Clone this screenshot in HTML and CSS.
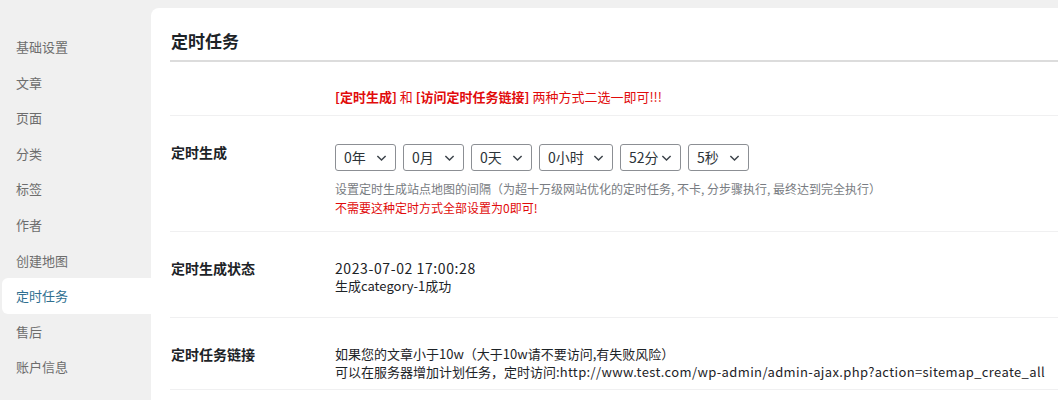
FILE: index.html
```html
<!DOCTYPE html>
<html lang="zh-CN">
<head>
    <meta charset="UTF-8">
    <meta name="viewport" content="width=device-width, initial-scale=1.0">
    <title>定时任务</title>
    <link rel="stylesheet" href="styles.css">
</head>
<body>

    <div class="wrap">

        <ul class="side-menu">
            <li>基础设置</li>
            <li>文章</li>
            <li>页面</li>
            <li>分类</li>
            <li>标签</li>
            <li>作者</li>
            <li>创建地图</li>
            <li class="active">定时任务</li>
            <li>售后</li>
            <li>账户信息</li>
        </ul>

        <div class="panel">
            <h2 class="panel-title">定时任务</h2>

            <div class="form-row row-notice">
                <div class="form-label"></div>
                <div class="form-field">
                    <p class="text-red"><b>[定时生成]</b> 和 <b>[访问定时任务链接]</b> 两种方式二选一即可!!!</p>
                </div>
            </div>

            <div class="form-row row-interval">
                <div class="form-label">定时生成</div>
                <div class="form-field">
                    <div class="select-group">
                        <div class="select"><span>0年</span><svg viewBox="0 0 12 8"><path d="M1.5 1.8 6 6.2 10.5 1.8"/></svg></div>
                        <div class="select"><span>0月</span><svg viewBox="0 0 12 8"><path d="M1.5 1.8 6 6.2 10.5 1.8"/></svg></div>
                        <div class="select"><span>0天</span><svg viewBox="0 0 12 8"><path d="M1.5 1.8 6 6.2 10.5 1.8"/></svg></div>
                        <div class="select select-wide"><span>0小时</span><svg viewBox="0 0 12 8"><path d="M1.5 1.8 6 6.2 10.5 1.8"/></svg></div>
                        <div class="select"><span>52分</span><svg viewBox="0 0 12 8"><path d="M1.5 1.8 6 6.2 10.5 1.8"/></svg></div>
                        <div class="select"><span>5秒</span><svg viewBox="0 0 12 8"><path d="M1.5 1.8 6 6.2 10.5 1.8"/></svg></div>
                    </div>
                    <p class="description">设置定时生成站点地图的间隔（为超十万级网站优化的定时任务, 不卡, 分步骤执行, 最终达到完全执行）</p>
                    <p class="text-red text-small">不需要这种定时方式全部设置为0即可!</p>
                </div>
            </div>

            <div class="form-row row-status">
                <div class="form-label">定时生成状态</div>
                <div class="form-field">
                    <p class="status-time">2023-07-02 17:00:28</p>
                    <p>生成category-1成功</p>
                </div>
            </div>

            <div class="form-row row-link">
                <div class="form-label">定时任务链接</div>
                <div class="form-field">
                    <p>如果您的文章小于10w（大于10w请不要访问,有失败风险）</p>
                    <p>可以在服务器增加计划任务，定时访问:<span class="url">http://www.test.com/wp-admin/admin-ajax.php?action=sitemap_create_all</span></p>
                </div>
            </div>
        </div>

    </div>

</body>
</html>
```

FILE: styles.css
```css
body {
    margin: 0;
    background: #f0f0f0;
    font-family: "Noto Sans CJK SC", "Noto Sans", sans-serif;
    color: #1d2327;
}
.wrap {
    display: flex;
    align-items: flex-start;
    height: 400px;
    overflow: hidden;
}
.side-menu {
    width: 149px;
    margin: 0 0 0 2px;
    padding: 29px 0 0 0;
    list-style: none;
    flex-shrink: 0;
}
.side-menu li {
    height: 35.6px;
    line-height: 35.6px;
    padding-left: 14px;
    font-size: 13px;
    color: #6d6d6d;
    border-radius: 6px 0 0 6px;
}
.side-menu li.active {
    background: #fff;
    color: #2f6f90;
}
.panel {
    flex: 1;
    margin-top: 8px;
    min-height: 400px;
    background: #fff;
    border-radius: 8px 0 0 0;
    padding: 21px 0 0 19px;
}
.panel-title {
    margin: 0;
    padding: 0 0 7px 1px;
    font-size: 17px;
    line-height: 24px;
    font-weight: 700;
    border-bottom: 2px solid #dcdcdc;
}
.form-row {
    display: flex;
    border-bottom: 1px solid #f0f0f1;
    padding-top: 26px;
}
.form-label {
    width: 164px;
    flex-shrink: 0;
    padding-left: 1px;
    font-size: 14px;
    line-height: 20px;
    font-weight: 700;
}
.form-field {
    flex: 1;
    padding-top: 1px;
    font-size: 13px;
    line-height: 18px;
    color: #1d2327;
}
.form-field p {
    margin: 0;
    white-space: nowrap;
}
.row-notice {
    padding-bottom: 9px;
}
.row-notice .form-field {
    padding-top: 0;
}
.row-interval {
    padding-bottom: 14px;
}
.row-interval .form-field {
    padding-top: 2px;
    line-height: 19px;
}
.row-status {
    padding-bottom: 22px;
}
.status-time {
    font-size: 14px;
    letter-spacing: 0.6px;
}
.row-link {
    padding-bottom: 9px;
}
.row-link .form-field {
    line-height: 17.5px;
}
.url {
    letter-spacing: 0.37px;
}
.text-red {
    color: #e10b0b;
}
.text-red b {
    font-weight: 700;
}
.text-small {
    font-size: 12px;
}
.description {
    font-size: 12px;
    color: #787c82;
}
.select-group {
    display: flex;
    gap: 7px;
    margin-bottom: 8px;
}
.select {
    box-sizing: border-box;
    width: 61px;
    height: 27px;
    display: flex;
    align-items: center;
    justify-content: space-between;
    padding: 0 8px 0 8px;
    border: 1px solid #8c8f94;
    border-radius: 3px;
    font-size: 14px;
    color: #2c3338;
    background: #fff;
}
.select-wide {
    width: 74px;
}
.select svg {
    width: 11px;
    height: 8px;
    fill: none;
    stroke: #3c434a;
    stroke-width: 1.6;
}
```
